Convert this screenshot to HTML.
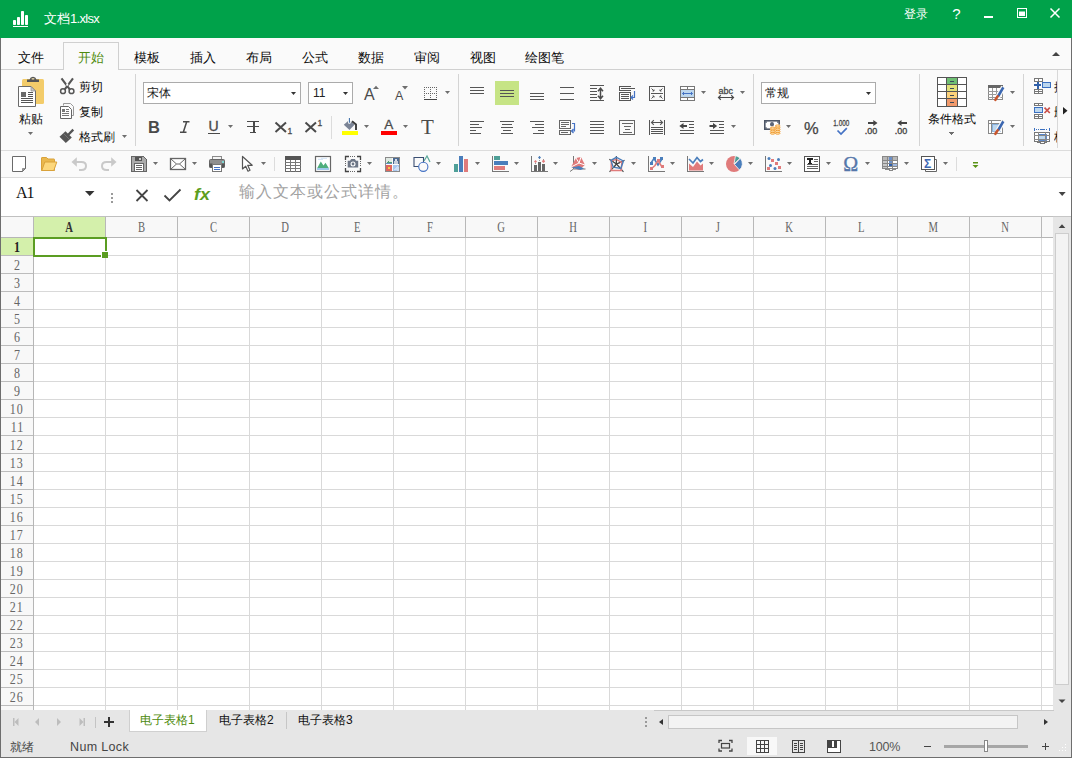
<!DOCTYPE html>
<html lang="zh">
<head>
<meta charset="utf-8">
<title>文档1.xlsx</title>
<style>
*{box-sizing:border-box;margin:0;padding:0}
html,body{width:1072px;height:758px;overflow:hidden;background:#fafafa}
body{font-family:"Liberation Sans",sans-serif;font-size:12px;color:#222;position:relative}
.a{position:absolute}
svg{position:absolute;overflow:visible}
#title{left:0;top:0;width:1072px;height:38px;background:#00a24a}
#title .t{color:#fff;font-size:13px;left:44px;top:11px;line-height:16px;white-space:nowrap}
#tabs{left:0;top:38px;width:1072px;height:32px;background:#fafafa;border-bottom:1px solid #d0d0d0}
.tab{position:absolute;top:12px;font-size:13px;line-height:16px;color:#0a0a0a;white-space:nowrap}
#tabon{left:63px;top:4px;width:56px;height:28px;border:1px solid #d0d0d0;border-bottom:none;background:#fafafa}
#ribbon{left:0;top:70px;width:1072px;height:78px;background:#fafafa}
.vsep{position:absolute;width:1px;background:#d4d4d4;top:74px;height:72px}
.combo{position:absolute;height:22px;top:82px;background:#fff;border:1px solid #ababab;font-size:12px;line-height:20px;padding-left:3px;white-space:nowrap}
.lbl{position:absolute;font-size:12px;line-height:14px;white-space:nowrap;color:#0a0a0a}
#tb2{left:0;top:150px;width:1072px;height:28px;background:#fafafa;border-top:1px solid #dcdcdc;border-bottom:1px solid #dcdcdc}
#fbar{left:0;top:178px;width:1072px;height:38px;background:#fff}
#sheetbar{left:0;top:710px;width:1072px;height:23px;background:#e6e6e6}
#status{left:0;top:733px;width:1072px;height:25px;background:#e6e6e6}
#bl{left:0;top:38px;width:1px;height:720px;background:#6e6e6e}
#br{left:1071px;top:38px;width:1px;height:720px;background:#6e6e6e}
#bb{left:0;top:757px;width:1072px;height:1px;background:#6e6e6e}

.s{stroke:#555;stroke-width:1;fill:none}
.f{fill:#555;stroke:none}
.dd{fill:#6e6e6e;stroke:none}
.ce{shape-rendering:crispEdges}
#ico{left:0;top:0}

#grid{left:1px;top:216px;width:1052px;height:494px;background:#fff;overflow:hidden}
#cells{left:0;top:22px;width:1052px;height:472px;background-image:linear-gradient(to right,#d9d9d9 1px,transparent 1px),linear-gradient(to bottom,#d9d9d9 1px,transparent 1px);background-size:72px 18px,72px 18px;background-position:32px 0,0 -1px}
#colhdr{left:0;top:0;width:1052px;height:22px;background:#f8f8f8;border-top:1px solid #c0c0c0;border-bottom:1px solid #b6b6b6}
#rowhdr{left:0;top:22px;width:33px;height:472px;background:#f8f8f8;border-right:1px solid #b6b6b6;background-image:linear-gradient(to bottom,#bcbcbc 1px,transparent 1px);background-size:33px 18px;background-position:0 -1px}
.ch{position:absolute;top:0;width:72px;height:20px;border-right:1px solid #b8b8b8;text-align:center;font-family:"Liberation Serif",serif;font-size:14px;line-height:21px;color:#666}
.ch span{display:inline-block;transform:scaleX(.76)}
.rh span{display:inline-block;transform:scaleX(.8)}
.rh{position:absolute;left:0;width:32px;height:18px;text-align:center;font-family:"Liberation Serif",serif;font-size:15px;line-height:19px;color:#666;letter-spacing:1.250px}
#vsb{left:1053px;top:216px;width:18px;height:494px;background:#e6e6e6}
#vth{left:1055px;top:233px;width:14px;height:452px;background:#f3f3f3;border:1px solid #cdcdcd}
#hth{left:668px;top:715px;width:350px;height:14px;background:#f3f3f3;border:1px solid #c6c6c6}
.stab{position:absolute;top:713px;font-size:12px;line-height:14px;white-space:nowrap;color:#111}
.st{position:absolute;top:740px;font-size:12px;line-height:14px;white-space:nowrap;color:#444}
</style>
</head>
<body>
<div id="title" class="a"><div class="a t">文档<span style="letter-spacing:-.7px">1.xlsx</span></div><div class="a" style="left:904px;top:7px;color:#fff;font-size:12px;line-height:14px;white-space:nowrap">登录</div></div>
<div id="tabs" class="a">
  <div id="tabon" class="a"></div>
  <div class="tab" style="left:18px">文件</div>
  <div class="tab" style="left:78px;color:#4e8a0c">开始</div>
  <div class="tab" style="left:134px">模板</div>
  <div class="tab" style="left:190px">插入</div>
  <div class="tab" style="left:246px">布局</div>
  <div class="tab" style="left:302px">公式</div>
  <div class="tab" style="left:358px">数据</div>
  <div class="tab" style="left:414px">审阅</div>
  <div class="tab" style="left:470px">视图</div>
  <div class="tab" style="left:525px">绘图笔</div>
</div>
<div id="ribbon" class="a"></div>
<!--RIBBON-HTML-->
<div class="vsep" style="left:135px"></div>
<div class="vsep" style="left:458px"></div>
<div class="vsep" style="left:753px"></div>
<div class="vsep" style="left:919px"></div>
<div class="vsep" style="left:1023px"></div>
<div class="vsep" style="left:331px;top:116px;height:23px;background:#dcdcdc"></div>
<div class="lbl" style="left:19px;top:112px;font-size:12px">粘贴</div>
<div class="lbl" style="left:79px;top:80px">剪切</div>
<div class="lbl" style="left:79px;top:105px">复制</div>
<div class="lbl" style="left:79px;top:130px">格式刷</div>
<div class="combo" style="left:143px;width:158px">宋体</div>
<div class="combo" style="left:308px;width:45px;padding-left:4px">11</div>
<div class="combo" style="left:761px;width:115px">常规</div>
<div class="lbl" style="left:928px;top:112px">条件格式</div>
<div class="a" style="left:1054px;top:78px;width:3px;height:70px;overflow:hidden"><div class="lbl" style="left:0;top:2px">插</div><div class="lbl" style="left:0;top:27px">删</div><div class="lbl" style="left:0;top:52px">格</div></div>
<!--/RIBBON-HTML-->
<div id="tb2" class="a"></div>
<div id="fbar" class="a"></div>
<div class="a" style="left:16px;top:184px;font-family:'Liberation Serif',serif;font-size:16px;line-height:18px;color:#111;letter-spacing:-1px">A1</div>
<div class="a" style="left:239px;top:182px;font-family:'Liberation Serif',serif;font-size:16px;line-height:20px;color:#a2a2a2;white-space:nowrap;letter-spacing:1px">输入文本或公式详情。</div>
<div id="grid" class="a">
<div id="cells" class="a"></div>
<div id="colhdr" class="a">
<div class="ch" style="left:0;width:33px"></div>
<div class="ch" style="left:33px;background:#d4f0ab;color:#333;font-weight:bold"><span>A</span></div>
<div class="ch" style="left:105px"><span>B</span></div>
<div class="ch" style="left:177px"><span>C</span></div>
<div class="ch" style="left:249px"><span>D</span></div>
<div class="ch" style="left:321px"><span>E</span></div>
<div class="ch" style="left:393px"><span>F</span></div>
<div class="ch" style="left:465px"><span>G</span></div>
<div class="ch" style="left:537px"><span>H</span></div>
<div class="ch" style="left:609px"><span>I</span></div>
<div class="ch" style="left:681px"><span>J</span></div>
<div class="ch" style="left:753px"><span>K</span></div>
<div class="ch" style="left:825px"><span>L</span></div>
<div class="ch" style="left:897px"><span>M</span></div>
<div class="ch" style="left:969px"><span>N</span></div>
</div>
<div id="rowhdr" class="a">
<div class="rh" style="top:0px;background:#d4f0ab;color:#222;font-weight:bold;height:17px"><span>1</span></div>
<div class="rh" style="top:18px"><span>2</span></div>
<div class="rh" style="top:36px"><span>3</span></div>
<div class="rh" style="top:54px"><span>4</span></div>
<div class="rh" style="top:72px"><span>5</span></div>
<div class="rh" style="top:90px"><span>6</span></div>
<div class="rh" style="top:108px"><span>7</span></div>
<div class="rh" style="top:126px"><span>8</span></div>
<div class="rh" style="top:144px"><span>9</span></div>
<div class="rh" style="top:162px"><span>10</span></div>
<div class="rh" style="top:180px"><span>11</span></div>
<div class="rh" style="top:198px"><span>12</span></div>
<div class="rh" style="top:216px"><span>13</span></div>
<div class="rh" style="top:234px"><span>14</span></div>
<div class="rh" style="top:252px"><span>15</span></div>
<div class="rh" style="top:270px"><span>16</span></div>
<div class="rh" style="top:288px"><span>17</span></div>
<div class="rh" style="top:306px"><span>18</span></div>
<div class="rh" style="top:324px"><span>19</span></div>
<div class="rh" style="top:342px"><span>20</span></div>
<div class="rh" style="top:360px"><span>21</span></div>
<div class="rh" style="top:378px"><span>22</span></div>
<div class="rh" style="top:396px"><span>23</span></div>
<div class="rh" style="top:414px"><span>24</span></div>
<div class="rh" style="top:432px"><span>25</span></div>
<div class="rh" style="top:450px"><span>26</span></div>
<div class="rh" style="top:468px"></div>
</div>
<div class="a" style="left:32px;top:21px;width:74px;height:20px;border:2px solid #5b9d22"></div>
<div class="a" style="left:100px;top:35px;width:7px;height:7px;background:#fff"></div>
<div class="a" style="left:101px;top:36px;width:6px;height:6px;background:#5b9d22"></div>
</div>
<div id="vsb" class="a" style="border-top:1px solid #c6c6c6"></div><div id="vth" class="a"></div>
<div id="sheetbar" class="a"></div>
<div id="status" class="a"></div>
<div class="a" style="left:654px;top:710px;width:400px;height:1px;background:#c8c8c8"></div>
<div class="a" style="left:129px;top:710px;width:78px;height:22px;background:#fff;border-left:1px solid #cfcfcf;border-right:1px solid #cfcfcf;border-bottom:1px solid #d0d0d0"></div>
<div class="a" style="left:286px;top:712px;width:1px;height:17px;background:#c6c6c6"></div>
<div class="stab" style="left:140px;color:#4e8a0c">电子表格1</div>
<div class="stab" style="left:219px">电子表格2</div>
<div class="stab" style="left:298px">电子表格3</div>
<div id="hth" class="a"></div>
<div class="st" style="left:10px">就绪</div>
<div class="st" style="left:70px;font-size:12.500px;letter-spacing:.35px">Num Lock</div>
<div class="a" style="left:747px;top:737px;width:30px;height:18px;background:#f8f8f8"></div>
<div class="st" style="left:869px;font-size:12.500px;letter-spacing:-.2px;color:#555">100%</div>
<svg id="ico" class="a" width="1072" height="758" viewBox="0 0 1072 758">
<!--SVG-TITLE-->
<g id="logo" fill="#fff"><rect x="13" y="20" width="3" height="5" rx=".8"/><rect x="17" y="17" width="3" height="8" rx=".8"/><rect x="21" y="11" width="3" height="14" rx=".8"/><rect x="25" y="15" width="3" height="10" rx=".8"/><rect x="13" y="26" width="15" height="1"/></g>
<g id="winbtn"><text x="952.300" y="18.500" font-size="15" font-family="Liberation Sans, sans-serif" fill="#fff">?</text>
<rect x="984" y="16" width="9" height="2" fill="#fff"/>
<rect x="1017.500" y="8.500" width="9" height="9" fill="none" stroke="#fff"/><rect x="1019" y="11.500" width="6" height="4.500" fill="#fff"/>
<path d="M1050.500 8.500l9 9M1059.500 8.500l-9 9" stroke="#fff" stroke-width="1.500" fill="none"/>
<path d="M1052 56l4-4 4 4z" fill="#444"/></g>
<!--SVG-RIBBON1-->
<g id="paste">
 <rect x="22" y="79" width="22" height="25" rx="1.500" fill="#f3cc6a"/>
 <path d="M27 82v-2.500h2.500q.8-2.700 3.500-2.700t3.500 2.700h2.500v2.500z" fill="#555"/>
 <rect x="31.500" y="78.200" width="3" height="1.200" rx=".6" fill="#f6e3ae"/>
 <path d="M18.500 86.500h12.500l4.500 4.500v15.500h-17z" fill="#fff" stroke="#6a6a6a"/>
 <path d="M31 86.500v4.500h4.500z" fill="#c8c8c8" stroke="#8a8a8a" stroke-width=".7"/>
 <rect x="21" y="92" width="5" height="5" fill="#6a6a6a"/>
 <path class="s ce" d="M27.500 93.500h5.500M27.500 95.500h5.500M27.500 97.500h5.500M21 99.500h12M21 101.500h12M21 103.500h12" stroke="#777" transform="translate(0,-1)"/>
 <path class="dd" d="M28 132h5l-2.500 3z"/>
</g>
<g id="cut">
 <path d="M61.500 78.300l9 12M73 78.300l-9 12" stroke="#555" stroke-width="2.100" fill="none"/>
 <circle cx="63" cy="91.200" r="2.400" fill="#fafafa" stroke="#555" stroke-width="1.500"/>
 <circle cx="71.500" cy="91.200" r="2.400" fill="#fafafa" stroke="#555" stroke-width="1.500"/>
 <rect x="66.250" y="83.700" width="2" height="2" fill="#fff"/>
</g>
<g id="copy">
 <path d="M63.500 105.500v-2h7l3 3v9h-2" fill="none" stroke="#9a9a9a"/>
 <path d="M60.500 106.500h8l3 3v9h-11z" fill="#fff" stroke="#666"/>
 <rect x="62" y="109" width="3" height="3" fill="#777"/>
 <path class="ce" d="M66 109.500h3M66 111.500h3M62 113.500h7M62 115.500h7" stroke="#777" fill="none"/>
</g>
<g id="brush">
 <path d="M73.300 129.700l-5.300 5.300" stroke="#555" stroke-width="2.400" fill="none"/>
 <path d="M65.500 131.200l6.300 6.300-6 5.500-6.300-6.300z" fill="#555"/>
 <path d="M63.300 133.300l6.300 6.300" stroke="#8a8a8a" stroke-width=".6" fill="none"/>
 <path class="dd" d="M122 135h5l-2.500 3z"/>
</g>
<!--SVG-RIBBON2-->
<g id="fontgrp" font-family="Liberation Sans, sans-serif" fill="#4a4a4a">
 <path d="M291 92h5l-2.5 3z" fill="#333"/>
 <path d="M343 92h5l-2.5 3z" fill="#333"/>
 <path d="M866 92h5l-2.5 3z" fill="#333"/>
 <text x="364" y="100" font-size="16">A</text>
 <path class="dd" d="M373 89l3-3.300 3 3.300z"/>
 <text x="395" y="100" font-size="12.500">A</text>
 <path class="dd" d="M402 86h6l-3 3.500z"/>
 <g id="bordericon">
  <path class="ce" d="M424 87h1v1h-1zM424 89h1v1h-1zM424 91h1v1h-1zM424 93h1v1h-1zM424 95h1v1h-1zM424 97h1v1h-1zM426 87h1v1h-1zM426 93h1v1h-1zM428 87h1v1h-1zM428 93h1v1h-1zM430 87h1v1h-1zM430 89h1v1h-1zM430 91h1v1h-1zM430 93h1v1h-1zM430 95h1v1h-1zM430 97h1v1h-1zM432 87h1v1h-1zM432 93h1v1h-1zM434 87h1v1h-1zM434 93h1v1h-1zM436 87h1v1h-1zM436 89h1v1h-1zM436 91h1v1h-1zM436 93h1v1h-1zM436 95h1v1h-1zM436 97h1v1h-1z" fill="#666"/>
  <rect class="ce" x="424" y="99" width="13" height="1.300" fill="#444"/>
  <path class="dd" d="M445 91h5l-2.5 3z"/>
 </g>
 <text x="148" y="133" font-size="16.500" font-weight="bold">B</text>
 <path d="M183 121.700h6.500M180 132.300h6.500M186.700 121.700l-3.400 10.600" stroke="#4a4a4a" stroke-width="1.500" fill="none"/>
 <text x="208.500" y="131" font-size="14" stroke="#4a4a4a" stroke-width=".35">U</text>
 <path class="ce" d="M208 133.500h12" stroke="#4a4a4a" fill="none"/>
 <path class="dd" d="M228 125h5l-2.5 3z"/>
 <path class="ce" d="M247 121.500h12M247 126.500h12M250 132.500h6M253.500 122v10" stroke="#4a4a4a" stroke-width="1" fill="none"/>
 <path class="ce" d="M253 122h1.500v10h-1.500z" fill="#4a4a4a"/>
 <path d="M275.500 122.500l10.500 9.500M286 122.500l-10.500 9.500" stroke="#4a4a4a" stroke-width="2" fill="none"/>
 <text x="287.500" y="134" font-size="8.500" stroke="#4a4a4a" stroke-width=".3">1</text>
 <path d="M305.500 122.500l10.500 9.500M316 122.500l-10.500 9.500" stroke="#4a4a4a" stroke-width="2" fill="none"/>
 <text x="317.500" y="126" font-size="8.500" stroke="#4a4a4a" stroke-width=".3">1</text>
 <g id="bucket">
  <path d="M349.200 120l5.300 4.800-5 5.300-5.700-5.300z" fill="#7b8496"/>
  <path d="M352 121.300l4 3.200v5.500" stroke="#3a3a3a" stroke-width="1.900" fill="none"/>
  <rect x="348" y="117.500" width="2.800" height="6.300" rx="1.200" fill="#fff"/>
  <path d="M349.400 118v4.700" stroke="#3f6fa8" stroke-width="1.100" fill="none"/>
  <rect x="342" y="131" width="16" height="4" fill="#ffff00"/>
  <path class="dd" d="M364 125h5l-2.500 3z"/>
 </g>
 <text x="384.300" y="128.600" font-size="13.500" stroke="#4a4a4a" stroke-width=".3">A</text>
 <rect x="381" y="131" width="16" height="4" fill="#ff0000"/>
 <path class="dd" d="M403 125h5l-2.500 3z"/>
 <text x="421" y="134" font-size="21" font-family="Liberation Serif, serif">T</text>
</g>
<!--SVG-RIBBON3-->
<g id="align" class="s ce" stroke="#555">
<rect x="495" y="81" width="24" height="24" fill="#c6e485" stroke="none"/>
<path d="M470 87.5h14M470 90.5h14M470 93.5h14"/>
<path d="M500 90.5h14M500 93.5h14M500 96.5h14"/>
<path d="M530 93.5h14M530 96.5h14M530 99.5h14"/>
<path d="M560 87.5h14M560 93.5h14M560 99.5h14"/>
<path d="M590 85.5h14M590 100.5h14M590 88.5h7M590 91.5h7M590 94.5h7M590 97.5h7"/>
</g>
<path d="M600.500 88.500v10M598 91.200l2.500-3 2.500 3M598 95.800l2.500 3 2.500-3" stroke="#4a4a4a" stroke-width="1.500" fill="none"/>
<g class="s ce" stroke="#666"><path d="M619 86.500h12M619.500 86v5M619 90.500h12M621 88.500h14"/><rect x="619.500" y="92.500" width="11" height="8"/><path d="M621 94.500h8M621 96.500h8M621 98.500h8"/></g>
<path d="M634.500 91v6.500h-3M633 95.500l-2 2 2 2" stroke="#4472c4" stroke-width="1.200" fill="none"/>
<g class="s ce" stroke="#666"><rect x="649.500" y="86.500" width="15" height="14"/><path d="M651 93.500h12"/></g>
<path d="M651.500 88.500l2.500 2.500M654 89.500v1.500h-1.500M662.500 88.500l-2.500 2.500M660 89.500v1.500h1.500M651.500 98.500l2.500-2.500M654 97.500v-1.500h-1.500M662.500 98.500l-2.500-2.500M660 97.500v-1.500h1.500" stroke="#555" stroke-width="1" fill="none"/>
<g class="ce"><rect x="680.500" y="86.500" width="14" height="14" fill="#fff" stroke="#777"/><rect x="681" y="90" width="13" height="7" fill="#bdd7ee"/><path d="M680 89.500h15M680 97.500h15M687.500 87v2M687.500 98v2" stroke="#777" fill="none"/></g>
<path d="M682.500 93.500h10M684 92l-1.500 1.500 1.500 1.500M691 92l1.500 1.500-1.500 1.500" stroke="#4472c4" stroke-width="1" fill="none"/>
<path class="dd" d="M701 91h5l-2.5 3z"/>
<text x="718.500" y="93.500" font-size="9.500" fill="#4a4a4a" stroke="#4a4a4a" stroke-width=".3" font-family="Liberation Sans, sans-serif" textLength="14.500" lengthAdjust="spacingAndGlyphs">abc</text>
<path d="M718.500 97.500h15M720.800 95.300l-2.300 2.200 2.300 2.200M731.200 95.300l2.300 2.200-2.300 2.200" stroke="#4a4a4a" stroke-width="1.200" fill="none"/>
<path class="dd" d="M740 91h5l-2.5 3z"/>
<g class="s ce" stroke="#555">
<path d="M470 121.5h14M470 124.5h9M470 127.5h12M470 130.5h6M470 133.5h11"/>
<path d="M500 121.5h14M502 124.5h10M501 127.5h12M503 130.5h8M501 133.5h12"/>
<path d="M530 121.5h14M535 124.5h9M532 127.5h12M538 130.5h6M533 133.5h11"/>
<path d="M590 121.5h14M590 124.5h14M590 127.5h14M590 130.5h14M590 133.5h14"/>
<rect x="559.500" y="120.500" width="11" height="8" stroke="#666"/><path d="M561 122.500h8M561 124.500h8M561 126.500h5" stroke="#666"/><rect x="559.500" y="130.500" width="11" height="4" stroke="#666"/><path d="M561 132.500h7" stroke="#666"/>
<rect x="619.500" y="120.500" width="15" height="14" stroke="#666"/><path d="M622 123.500h11M624 126.500h7M625 129.500h5M623 132.500h9" stroke="#666"/>
<path d="M649.500 120v15M664.500 120v15M651 127.500h12M651 129.500h12M651 131.500h12M651 133.500h12"/>
<path d="M680 121.500h14M689 124.500h5M689 127.500h5M680 130.500h14M680 133.500h14"/>
<path d="M710 121.500h14M719 124.500h5M719 127.500h5M710 130.500h14M710 133.500h14"/>
</g>
<path d="M572 123.500h2.500v7.500h-2M573.500 129l-2 2 2 2" stroke="#4472c4" stroke-width="1.200" fill="none"/>
<path d="M651.500 122.500h11M653.800 120.200l-2.300 2.300 2.300 2.300M660.200 120.200l2.300 2.300-2.300 2.300" stroke="#555" stroke-width="1.100" fill="none"/>
<path d="M679.300 126l4.200-3v2h3.500v2h-3.500v2z" fill="#444"/>
<path d="M717.200 126l-4.200-3v2h-3.500v2h3.500v2z" fill="#444"/>
<path class="dd" d="M731 125h5l-2.5 3z"/>
<!--SVG-RIBBON4-->
<g id="numgrp" font-family="Liberation Sans, sans-serif" fill="#555">
 <g id="currency">
  <rect x="764.800" y="120.800" width="14.400" height="8.400" fill="#fff" stroke="#4d5666" stroke-width="1.600"/>
  <path d="M765.500 121.500h1.600q0 1.600-1.600 1.600zM778.500 121.500h-1.600q0 1.600 1.600 1.600zM765.500 128.500h1.600q0-1.600-1.600-1.600z" fill="#4d5666"/>
  <ellipse cx="772" cy="124.300" rx="2" ry="2.300" fill="#5b6577"/>
  <rect x="770" y="126.500" width="5.400" height="8" fill="#fafafa"/><rect x="775" y="124.600" width="5.600" height="10" fill="#fafafa"/>
  <g fill="#fde3b3" stroke="#ef9424" stroke-width=".8"><ellipse cx="772.7" cy="133.2" rx="2.400" ry="1.100"/><ellipse cx="772.7" cy="131.5" rx="2.400" ry="1.100"/><ellipse cx="772.7" cy="129.8" rx="2.400" ry="1.100"/><ellipse cx="772.7" cy="128.1" rx="2.400" ry="1.100"/><ellipse cx="777.7" cy="133.2" rx="2.400" ry="1.100"/><ellipse cx="777.7" cy="131.4" rx="2.400" ry="1.100"/><ellipse cx="777.7" cy="129.6" rx="2.400" ry="1.100"/><ellipse cx="777.7" cy="127.8" rx="2.400" ry="1.100"/><ellipse cx="777.7" cy="126" rx="2.400" ry="1.100"/></g>
  <path class="dd" d="M786 125h5l-2.500 3z"/>
 </g>
 <text x="804" y="133.800" font-size="16.500" fill="#444" stroke="#444" stroke-width=".25">%</text>
 <text x="833.300" y="126" font-size="9.500" fill="#444" stroke="#444" stroke-width=".3" textLength="16" lengthAdjust="spacingAndGlyphs">1.000</text>
 <path d="M837.500 130.500l3.500 3.500 5.800-5.800" stroke="#4472c4" stroke-width="1.700" fill="none"/>
 <path d="M877.500 123l-4.200-3v2h-5.300v2h5.300v2z" fill="#444"/>
 <text x="864.800" y="133.800" font-size="9" fill="#444" stroke="#444" stroke-width=".35" textLength="12.500" lengthAdjust="spacingAndGlyphs">.00</text>
 <path d="M897.300 123l4.200-3v2h5.500v2h-5.500v2z" fill="#444"/>
 <text x="894.800" y="133.800" font-size="9" fill="#444" stroke="#444" stroke-width=".35" textLength="12.500" lengthAdjust="spacingAndGlyphs">.00</text>
</g>
<g id="condfmt" class="ce">
 <rect x="937.500" y="77.500" width="29" height="29" fill="#fff" stroke="#555"/>
 <rect x="947" y="78" width="10" height="7" fill="#6fbf73"/>
 <rect x="947" y="85" width="10" height="7" fill="#e3e27a"/>
 <rect x="947" y="92" width="10" height="7" fill="#fdd27a"/>
 <rect x="947" y="99" width="10" height="7" fill="#f29a6b"/>
 <path d="M946.500 77v30M957.500 77v30M937 84.500h30M937 91.500h30M937 98.500h30" stroke="#555" fill="none"/>
 <path d="M950 81.500h4M950 88.500h4M950 95.500h4M950 102.500h4" stroke="#3b4a5a" fill="none"/>
 <path class="dd" d="M949 132h5l-2.500 3z"/>
</g>
<g id="tblstyle">
 <g class="ce"><rect x="988.500" y="86.500" width="14" height="13" fill="#fff" stroke="#888"/><rect x="988" y="85" width="15" height="3" fill="#666"/>
 <path d="M988 91.500h15M988 94.500h15M988 97.500h15M992.500 88v12M996.500 88v12" stroke="#999" fill="none"/></g>
 <path d="M1003.500 87l-6 10.500" stroke="#fafafa" stroke-width="5"/>
 <path d="M1003.300 87.300l-5.300 9.200" stroke="#3a66b0" stroke-width="2.600" fill="none"/>
 <path d="M997.600 96.400l-2.200 3.400" stroke="#c8552d" stroke-width="2.600" stroke-linecap="round" fill="none"/>
 <path class="dd" d="M1010 91h5l-2.5 3z"/>
</g>
<g id="cellstyle">
 <g class="ce"><rect x="988.500" y="120.500" width="14" height="13" fill="#fff" stroke="#888"/><rect x="992" y="124" width="8" height="7" fill="#bdd7ee" stroke="#7aa7d8" stroke-width=".8"/>
 <path d="M988 123.500h15M991.500 120v14" stroke="#888" fill="none"/></g>
 <path d="M1003.500 121l-6 10.500" stroke="#fafafa" stroke-width="5"/>
 <path d="M1003.300 121.300l-5.300 9.200" stroke="#3a66b0" stroke-width="2.600" fill="none"/>
 <path d="M997.600 130.400l-2.200 3.400" stroke="#c8552d" stroke-width="2.600" stroke-linecap="round" fill="none"/>
 <path class="dd" d="M1010 125h5l-2.5 3z"/>
</g>
<g id="cellsgrp" class="ce">
 <rect x="1034.500" y="78.500" width="8" height="3" fill="#fff" stroke="#777"/><path d="M1038.500 79v3" stroke="#777"/>
 <path d="M1034 85h7M1037.500 81.500v7" stroke="#2f5fa8" stroke-width="2" fill="none"/>
 <rect x="1042.500" y="82.500" width="8" height="5" fill="#bdd7ee" stroke="#3a6fc0"/>
 <rect x="1034.500" y="89.500" width="8" height="4" fill="#fff" stroke="#777"/><path d="M1038.500 90v4M1034 91.500h9" stroke="#777"/>
 <rect x="1034.500" y="103.500" width="8" height="2" fill="#fff" stroke="#777"/><path d="M1038.500 104v2" stroke="#777"/>
 <rect x="1034.500" y="107.500" width="8" height="5" fill="#bdd7ee" stroke="#3a6fc0"/>
 <rect x="1034.500" y="114.500" width="8" height="4" fill="#fff" stroke="#777"/><path d="M1038.500 115v4M1034 116.500h9" stroke="#777"/>
 <rect x="1034.500" y="132.500" width="15" height="9" fill="#fff" stroke="#777"/>
 <rect x="1038" y="134" width="8" height="6" fill="#bdd7ee" stroke="#3a6fc0" stroke-width=".8"/>
 <path d="M1034 135.500h16M1034 139.500h16M1038.500 132v10M1045.500 132v10" stroke="#888" fill="none"/>
 <path d="M1034.500 128v3M1049.500 128v3" stroke="#3a6fc0"/>
 <path d="M1036 129.500h12" stroke="#3a6fc0" stroke-dasharray="1 1"/>
 <path d="M1040 129.500h4" stroke="#3a6fc0" stroke-width="1.500"/>
 <path d="M1037 142.500h3v1h4v-1h3" stroke="#777" fill="none"/>
</g>
<path d="M1044.500 107.700l5.300 5.300M1049.800 107.700l-5.300 5.300" stroke="#c9504a" stroke-width="1.700" fill="none"/>
<rect x="1057" y="70" width="14" height="78" fill="#fafafa"/>
<rect x="1057" y="70" width="1" height="78" fill="#d8d8d8"/>
<path d="M1063 107l4.500 3.700-4.500 3.700z" fill="#222"/>
<!--SVG-TB2-->
<g id="newdoc"><path d="M12.500 156.500h13v12l-3 3h-10z" fill="#fff" stroke="#6a6a6a"/><path d="M25.500 168.500h-3v3z" fill="#9a9a9a" stroke="#6a6a6a" stroke-width=".6"/></g>
<g id="folder"><path d="M41.500 170.500v-12.500q0-.5.5-.5h4.500l1.500 1.500h6q.5 0 .5.500v11z" fill="#eab84e" stroke="#d9a23a"/><path d="M41.800 170.500l3-8.500h12l-3 8.500z" fill="#fcd77c" stroke="#d9a23a"/></g>
<g id="undo" fill="none" stroke="#c9c9c9" stroke-width="2"><path d="M75 162h6.500q4.500 0 4.500 4t-4.500 4h-2.500"/><path d="M76.800 157.200l-5.300 4.800 5.300 4.800z" fill="#c9c9c9" stroke="none"/></g>
<g id="redo" fill="none" stroke="#c9c9c9" stroke-width="2"><path d="M113 162h-6.500q-4.500 0-4.500 4t4.500 4h2.500"/><path d="M111.200 157.200l5.300 4.800-5.300 4.800z" fill="#c9c9c9" stroke="none"/></g>
<g id="save" class="ce"><path d="M131.500 156.500h12l3 3v12h-15z" fill="#ababab" stroke="#666"/><rect x="135" y="157" width="7" height="4" fill="#555"/><rect x="139" y="158" width="2" height="2" fill="#ccc"/><rect x="134.500" y="163.500" width="9" height="8" fill="#fff" stroke="#666"/><path d="M136 165.500h6M136 167.500h6M136 169.500h6" stroke="#666"/></g>
<path class="dd" d="M153 162h5l-2.5 3z"/>
<g id="mail"><rect x="170.500" y="158.500" width="15" height="11" fill="#fff" stroke="#666" stroke-width="1.300"/><path d="M171 159l5.500 5-5.500 5M185 159l-5.500 5 5.500 5M176.500 164h3" stroke="#666" fill="none"/></g>
<path class="dd" d="M192 162h5l-2.5 3z"/>
<g id="printer"><rect x="212.500" y="156.500" width="9" height="4" fill="#f4f4f4" stroke="#8a8a8a"/><rect x="209.500" y="159.500" width="15" height="8" rx="1" fill="#8f8f8f" stroke="#666"/><rect x="222" y="161" width="2" height="2" fill="#7fd6d2"/><rect x="209.500" y="163.500" width="3" height="4" fill="#555"/><rect x="221.500" y="163.500" width="3" height="4" fill="#555"/><rect x="212.500" y="164.500" width="9" height="7" fill="#fff" stroke="#777"/><path class="ce" d="M214 167.500h6M214 169.500h6" stroke="#4472c4"/></g>
<g id="cursor"><path d="M242.500 156.500v12.500l3.200-2.800 2.300 5 2-.9-2.300-5h4.500z" fill="#fff" stroke="#555" stroke-width="1.200" stroke-linejoin="round"/></g>
<path class="dd" d="M261 162h5l-2.5 3z"/>
<rect x="274" y="157" width="1" height="14" fill="#dcdcdc"/>
<g id="table" class="ce"><rect x="285.500" y="156.500" width="15" height="15" fill="#fff" stroke="#666"/><rect x="285" y="156" width="16" height="4" fill="#555"/><path d="M285 162.500h16M285 165.500h16M285 168.500h16M290.500 160v12M295.500 160v12" stroke="#777"/></g>
<g id="pic"><rect x="315.500" y="156.500" width="15" height="15" fill="#fff" stroke="#666" stroke-width="1.200"/><path d="M318 159.300h5M321 158.300h6" stroke="#cfe2f6" stroke-width="1" fill="none"/><path d="M317 168.500l3.800-7 2.700 4 2-2.800 3.500 5.800z" fill="#4fae7c"/><rect x="317" y="168" width="12" height="2" fill="#9fc8ea"/></g>
<g id="shot"><path d="M345.500 160v-3.500h3.500M357 156.500h3.500v3.500M360.500 168v3.500h-3.500M349 171.500h-3.500v-3.500" stroke="#444" stroke-width="1.300" fill="none"/><path class="ce" d="M350 156.500h6M350 171.500h6M345.500 161v6M360.500 161v6" stroke="#666" stroke-dasharray="1 1"/><path d="M347.700 160.800h2.300l1.200-1.800h3.600l1.200 1.800h2.200v6.700h-10.500z" fill="#6d7686"/><circle cx="353" cy="164" r="2.500" fill="#fff"/><circle cx="353" cy="164" r="1.400" fill="#6d7686"/></g>
<path class="dd" d="M367 162h5l-2.5 3z"/>
<g id="gallery" class="ce"><rect x="386" y="158" width="6" height="6" fill="#dfe9e3"/><rect x="393" y="158" width="6" height="6" fill="#4b6a92"/><rect x="386" y="165" width="6" height="6" fill="#e0665c"/><rect x="393" y="165" width="6" height="6" fill="#a9c7ee"/><path d="M386 164l2.500-3.500 1.500 2 1-1 1 1.500v1z" fill="#4e9f77"/><rect x="386" y="163" width="6" height="1" fill="#6b8fc0"/><rect x="395" y="159" width="2" height="2" fill="#d9dde6"/><rect x="394" y="161" width="4" height="3" fill="#c6cedb"/><circle cx="389" cy="168" r="1.600" fill="#f7c948"/><path d="M394 170l3-4 2 2v3z" fill="#cfe0f7"/><rect x="385.500" y="157.500" width="14" height="14" fill="none" stroke="#8a8a8a"/><path d="M392.500 158v13M386 164.500h13" stroke="#fafafa"/></g>
<g id="shapes" fill="none"><path d="M414 157.500h9.500v9h-9.500z" stroke="#3b4f73" stroke-width="1.100" fill="#fafafa"/><path d="M424 161l3-5 3 6" stroke="#5aa89a" stroke-width="1.200"/><circle cx="423.300" cy="166.800" r="4.600" fill="#fafafa" stroke="#4472c4" stroke-width="1.100"/></g>
<path class="dd" d="M436 162h5l-2.5 3z"/>
<g id="colchart" class="ce"><rect x="454" y="164" width="4" height="8" fill="#4e9f97"/><rect x="459" y="156" width="4" height="16" fill="#4a7ebb"/><rect x="464" y="159" width="4" height="13" fill="#e07b7b"/></g>
<path class="dd" d="M475 162h5l-2.5 3z"/>
<g id="barchart" class="ce"><rect x="494" y="156" width="6" height="4" fill="#4e9f97"/><rect x="494" y="161" width="14" height="4" fill="#4a7ebb"/><rect x="494" y="166" width="11" height="4" fill="#e07b7b"/><path d="M492.500 156v15.500h16" stroke="#777" fill="none"/></g>
<path class="dd" d="M514 162h5l-2.5 3z"/>
<g id="stock" class="ce"><path d="M531.500 156v15.500h16" stroke="#777" fill="none"/><rect x="534" y="165" width="3" height="6" fill="#666"/><rect x="538" y="162" width="3" height="9" fill="#666"/><rect x="542" y="164" width="3" height="7" fill="#666"/><path d="M535.500 161v3M539.500 156v5M543.500 159v4" stroke="#999" stroke-dasharray="1 1"/></g><g><path d="M535.500 160l1.500 1.500-1.500 1.500-1.500-1.500z" fill="#e07b7b"/><path d="M539.500 156l1.500 1.500-1.500 1.500-1.500-1.500z" fill="#4a7ebb"/><path d="M543.500 159.500l1.700 1.700-1.700 1.700-1.700-1.700z" fill="#e07b7b"/></g>
<path class="dd" d="M553 162h5l-2.5 3z"/>
<g id="surface"><path d="M573.500 156v13M570 171.500l3.500-2.500h12" stroke="#777" fill="none"/><path d="M571 167l5-9 5-1 4 8-6 5z" fill="#e07b7b"/><path d="M576 158l3 5-8 4M579 163l6 2M579 163l2-6" stroke="#fff" stroke-width="1" fill="none"/><path d="M571.500 167.500l7.500-1.500 5 2.500-3.500 1.500z" fill="#4a7ebb"/></g>
<path class="dd" d="M592 162h5l-2.5 3z"/>
<!--SVG-TB2B-->
<g id="radar" fill="none"><path d="M616.400 164V156M616.400 164L609.300 159.300M616.400 164L624.600 160.300M616.400 164L609.500 171.800M616.400 164L623.500 171.800" stroke="#555" stroke-width="1.200"/><path d="M611.300 160.700L616.400 159.400L621.800 162.400L621.300 170.500L611.200 170.500z" stroke="#e07b7b" stroke-width="1.400"/><path d="M616.400 157.400L623.400 161L620.800 168.400L613.200 167.200L611 160.400z" stroke="#4a7ebb" stroke-width="1.400"/><path d="M616.400 164V159.500M616.400 164L613 161.500M616.400 164L620 162.800M616.400 164L614 167.500M616.400 164L619.500 167.300" stroke="#444" stroke-width=".9"/></g>
<path class="dd" d="M631 162h5l-2.5 3z"/>
<g id="linechart" fill="none"><path class="ce" d="M648.500 156v15.500h16" stroke="#777"/><path d="M651 163l3-4.500 4 6.500 4-6" stroke="#4a7ebb" stroke-width="1.500"/><path d="M651 169l4-3.500 3-5 4 6.500" stroke="#e07b7b" stroke-width="1.500"/><g class="ce" stroke="none"><rect x="650" y="162" width="3" height="3" fill="#4a7ebb"/><rect x="653" y="157" width="3" height="3" fill="#4a7ebb"/><rect x="660" y="157" width="3" height="3" fill="#4a7ebb"/><rect x="650" y="167" width="3" height="3" fill="#e07b7b"/><rect x="657" y="159" width="3" height="3" fill="#e07b7b"/><rect x="661" y="165" width="3" height="3" fill="#e07b7b"/></g></g>
<path class="dd" d="M670 162h5l-2.5 3z"/>
<g id="areachart"><path d="M689 170.500v-7l4 3.500 4-5.500 3.500 4 2.500-2v7z" fill="#e07b7b"/><path d="M689 159l4 4 4-5.500 3.500 4 2.500-2" stroke="#4a7ebb" stroke-width="1.700" fill="none"/><path class="ce" d="M687.500 156v15.500h16" stroke="#777" fill="none"/></g>
<path class="dd" d="M709 162h5l-2.5 3z"/>
<g id="pie"><circle cx="734" cy="164" r="8" fill="#e07b7b"/><path d="M734 164l1.500-8.300a8.200 8.200 0 0 1 4.500 2.500z" fill="#4e9f97" stroke="#fafafa" stroke-width=".8"/><path d="M734.500 164.500l5.800-6.200a8.200 8.200 0 0 1 -.8 11.700z" fill="#4a7ebb" stroke="#fafafa" stroke-width=".8"/></g>
<path class="dd" d="M748 162h5l-2.5 3z"/>
<g id="scatter"><path class="ce" d="M765.500 156v15.500h16" stroke="#777" fill="none"/><circle cx="769" cy="158.500" r="1.500" fill="#4a7ebb"/><circle cx="778.500" cy="159.500" r="1.500" fill="#4a7ebb"/><circle cx="770.500" cy="165.500" r="1.500" fill="#4a7ebb"/><circle cx="775" cy="168.500" r="1.500" fill="#4a7ebb"/><g class="ce" fill="#e07b7b"><rect x="771" y="159" width="3" height="3"/><rect x="775" y="162" width="3" height="3"/><rect x="767" y="167" width="3" height="3"/><rect x="778" y="166" width="3" height="3"/></g></g>
<path class="dd" d="M787 162h5l-2.5 3z"/>
<g id="textbox" class="ce"><rect x="804.500" y="156.500" width="15" height="15" fill="#fff" stroke="#555"/><rect x="807" y="158" width="6" height="2" fill="#222"/><rect x="809" y="158" width="2" height="6" fill="#222"/><rect x="808" y="163" width="4" height="1" fill="#222"/><path d="M814 159.500h4M814 161.500h4M807 164.500h11M807 166.500h11M807 168.500h11" stroke="#666"/></g>
<path class="dd" d="M826 162h5l-2.5 3z"/>
<text x="843.300" y="170.800" font-size="20.500" font-family="Liberation Serif, serif" fill="#5577aa" stroke="#5577aa" stroke-width=".35" textLength="15" lengthAdjust="spacingAndGlyphs">Ω</text>
<path class="dd" d="M865 162h5l-2.5 3z"/>
<g id="pivot" class="ce"><rect x="882.500" y="156.500" width="15" height="12" fill="#fff" stroke="#888"/><rect x="883" y="157" width="14" height="3" fill="#b8b8b8"/><rect x="883" y="160" width="4" height="8" fill="#c8c8c8"/><rect x="889" y="157" width="4" height="6" fill="#6c8fc7"/><rect x="889" y="163" width="4" height="3" fill="#2f5fa8"/><rect x="893" y="163" width="4" height="3" fill="#9db7e0"/><path d="M882 160.500h16M882 163.500h16M882 166.500h16M887.500 156v13M892.500 156v13" stroke="#888" fill="none"/><path d="M885 169.500h4v1h3v-1h4" stroke="#888" fill="none"/></g>
<path class="dd" d="M904 162h5l-2.5 3z"/>
<g id="sigma"><path d="M925.500 169.500v2h11v-12h-2" fill="#fff" stroke="#666"/><rect x="921.500" y="156.500" width="13" height="13" fill="#fff" stroke="#555"/><text x="924" y="167.500" font-size="12" font-family="Liberation Sans, sans-serif" font-weight="bold" fill="#3f68b3">Σ</text></g>
<path class="dd" d="M943 162h5l-2.5 3z"/>
<rect x="956" y="157" width="1" height="14" fill="#dcdcdc"/>
<g id="custom" fill="#5a9216"><rect x="973" y="162" width="5" height="1.500"/><path d="M972.500 165h6l-3 3z"/></g>
<!--SVG-FBAR-->
<path d="M85 191h9.500l-4.750 5z" fill="#333"/>
<g fill="#9a9a9a" class="ce"><rect x="111" y="193" width="2" height="2"/><rect x="111" y="197" width="2" height="2"/><rect x="111" y="201" width="2" height="2"/></g>
<path d="M136.500 190l11 11M147.500 190l-11 11" stroke="#444" stroke-width="1.800" fill="none"/>
<path d="M164.500 195.500l5 5 11-11" stroke="#444" stroke-width="1.800" fill="none"/>
<text x="194" y="200" font-size="17" font-family="Liberation Sans, sans-serif" font-weight="bold" font-style="italic" fill="#5d9e1e" textLength="16" lengthAdjust="spacingAndGlyphs">fx</text>
<path d="M1058.700 192h7l-3.500 4z" fill="#444"/>
<!--SVG-BOTTOM-->
<path d="M1058.700 228l3.300-3.800 3.300 3.800z" fill="#444"/><path d="M1058.500 699.500h7l-3.500 3.500z" fill="#444"/>
<g fill="#bdbdbd"><rect x="13" y="718" width="1.500" height="8"/><path d="M18.500 718v8l-4-4z"/><path d="M39 718v8l-4-4z"/><path d="M57 718v8l4-4z"/><path d="M79.500 718v8l4-4z"/><rect x="83.500" y="718" width="1.500" height="8"/><rect x="95" y="717" width="1" height="11" fill="#c4c4c4"/></g>
<path d="M104 722h10M109 717v10" stroke="#333" stroke-width="2" fill="none"/>
<g fill="#9a9a9a" class="ce"><rect x="645" y="717" width="2" height="2"/><rect x="645" y="721" width="2" height="2"/><rect x="645" y="725" width="2" height="2"/></g>
<path d="M663 719v6l-4-3z" fill="#333"/><path d="M1044 719v6l4-3z" fill="#333"/>
<g fill="none" stroke="#444" stroke-width="1.300"><path d="M719 743v-2.500h3M729 740.500h3v2.500M732 748.500v2.500h-3M722 751h-3v-2.500"/><rect x="721.500" y="743.500" width="8" height="4.500" stroke-width="1.200"/></g>
<g class="ce" fill="none" stroke="#444"><rect x="756.500" y="740.500" width="12" height="12"/><path d="M760.500 740v13M764.500 740v13M756 744.500h13M756 748.500h13"/></g>
<g class="ce" fill="none" stroke="#444"><rect x="792.500" y="740.500" width="12" height="12"/><path d="M798.500 740v13M794 743.500h3M794 745.500h3M794 747.500h3M794 749.500h3M800 743.500h3M800 745.500h3M800 747.500h3M800 749.500h3"/></g>
<g class="ce"><rect x="827.500" y="740.500" width="13" height="12" fill="#fff" stroke="#444"/><rect x="828" y="741" width="4" height="6" fill="#444"/><rect x="834" y="741" width="3" height="6" fill="#444"/><path d="M828 747.500h9" stroke="#444"/></g>
<rect x="924" y="746" width="7" height="1" fill="#444"/>
<rect x="944" y="745" width="84" height="3" fill="#a6a6a6"/>
<rect x="984.500" y="740.500" width="3" height="11" fill="#fff" stroke="#888"/>
<path d="M1042 746.500h7M1045.500 743v7" stroke="#444" stroke-width="1.200" fill="none" class="ce"/>
<g fill="#fff" class="ce"><rect x="1065" y="744" width="1" height="1"/><rect x="1062" y="747" width="1" height="1"/><rect x="1065" y="747" width="1" height="1"/><rect x="1059" y="750" width="1" height="1"/><rect x="1062" y="750" width="1" height="1"/><rect x="1065" y="750" width="1" height="1"/></g>
</svg>
<div id="bl" class="a"></div><div id="br" class="a"></div><div id="bb" class="a"></div>
</body>
</html>
